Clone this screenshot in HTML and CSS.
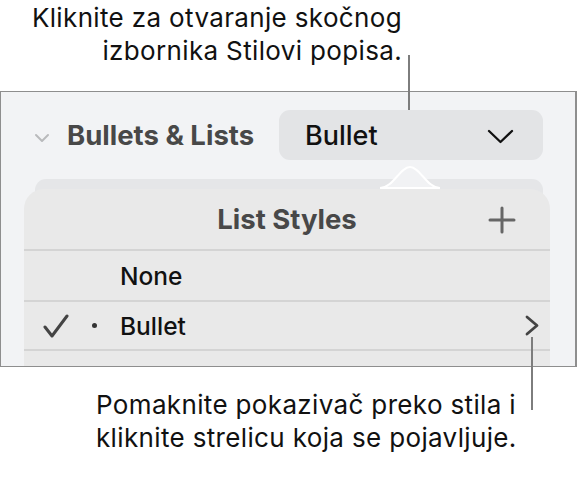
FILE: index.html
```html
<!DOCTYPE html>
<html lang="hr">
<head>
<meta charset="utf-8">
<link rel="stylesheet" href="styles.css">
</head>
<body>
<div class="page">
  <div class="callout callout-top">
    <p>Kliknite za otvaranje skočnog<br>izbornika Stilovi popisa.</p>
  </div>
  <div class="panel">
    <div class="header">
      <svg class="disclosure" width="16" height="10" viewBox="0 0 16 10"><polyline points="2,2 8,8 14,2" fill="none" stroke="#b9babc" stroke-width="2" stroke-linecap="round" stroke-linejoin="round"/></svg>
      <span class="section-title">Bullets &amp; Lists</span>
      <div class="popup">
        <span class="popup-label">Bullet</span>
        <svg class="popup-chevron" width="27" height="15" viewBox="0 0 27 15"><polyline points="2,2 13.5,13 25,2" fill="none" stroke="#111" stroke-width="2.3" stroke-linecap="round" stroke-linejoin="round"/></svg>
      </div>
    </div>
    <div class="stack">
      <div class="card"></div>
      <svg class="arrow" width="62" height="24" viewBox="0 0 62 24"><path d="M1,23 C14,23 21,2 31,2 C41,2 48,23 61,23 Z" fill="#f1f2f4" stroke="#ffffff" stroke-width="2"/></svg>
      <div class="popover">
        <div class="pop-head">
          <span class="pop-title">List Styles</span>
          <svg class="plus" width="28" height="28" viewBox="0 0 28 28"><path d="M14,2 V26 M2,14 H26" stroke="#666" stroke-width="3" stroke-linecap="round"/></svg>
        </div>
        <div class="row">
          <span class="mark"></span>
          <span class="bullet-col"></span>
          <span class="row-label">None</span>
        </div>
        <div class="row">
          <span class="mark"><svg width="26" height="24" viewBox="0 0 26 24"><polyline points="2,13 9,22 24,2" fill="none" stroke="#444" stroke-width="3" stroke-linecap="round" stroke-linejoin="round"/></svg></span>
          <span class="bullet-col"><span class="dot"></span></span>
          <span class="row-label">Bullet</span>
          <svg class="row-chevron" width="14" height="21" viewBox="0 0 14 21"><polyline points="2,2 12,10.5 2,19" fill="none" stroke="#444" stroke-width="2.8" stroke-linecap="round" stroke-linejoin="round"/></svg>
        </div>
        <div class="row"></div>
      </div>
    </div>
  </div>
  <div class="callout callout-bottom">
    <p>Pomaknite pokazivač preko stila i<br>kliknite strelicu koja se pojavljuje.</p>
  </div>
  <div class="leader leader-top"></div>
  <div class="leader leader-bottom"></div>
</div>
</body>
</html>
```

FILE: styles.css
```css
* { box-sizing: border-box; }
html, body { margin: 0; padding: 0; background: #ffffff; }
body { font-family: Inter, "Noto Sans", "DejaVu Sans", sans-serif; color: #111; }

.page { position: relative; width: 577px; height: 497px; overflow: hidden; }

.callout p { margin: 0; font-size: 26px; line-height: 33px; letter-spacing: 0.35px; color: #111; font-weight: 400; white-space: nowrap; }
.callout-top { height: 91px; width: 402px; text-align: right; padding-top: 1px; }
.callout-bottom { padding-left: 96px; padding-top: 21px; }

.panel {
  width: 577px;
  height: 276px;
  background: #f2f3f5;
  border: 1px solid #8e8e8e;
  border-right-width: 2px;
  overflow: hidden;
}

.header { display: flex; align-items: center; padding-top: 18px; height: 68px; }
.disclosure { margin-left: 33px; margin-top: 5px; }
.section-title { margin-left: 17px; font-size: 27.5px; font-weight: 700; color: #484848; }
.popup {
  margin-left: auto;
  margin-right: 32px;
  width: 264px;
  height: 50px;
  border-radius: 11px;
  background: #e3e4e6;
  display: flex;
  align-items: center;
  padding-left: 26px;
  padding-right: 29px;
}
.popup-label { font-size: 27px; font-weight: 500; color: #111; }
.popup-chevron { margin-left: auto; margin-top: 3px; }

.stack { position: relative; margin-top: 19px; height: 200px; }
.card {
  margin-left: 34px;
  width: 508px;
  height: 200px;
  border-radius: 11px;
  background: #e5e6e8;
}
.arrow { position: absolute; left: 378px; top: -14px; }
.popover {
  position: absolute;
  left: 23px;
  top: 10px;
  width: 526px;
  height: 200px;
  border-radius: 20px 20px 0 0;
  background: #e9e9e9;
}
.pop-head { position: relative; height: 60px; display: flex; align-items: center; justify-content: center; }
.pop-title { font-size: 27.5px; font-weight: 700; color: #484848; }
.plus { position: absolute; right: 34px; top: 17px; }

.row {
  display: flex;
  align-items: center;
  height: 51px;
  border-top: 2px solid #d4d4d4;
  padding-left: 19px;
  padding-right: 11px;
}
.row + .row { height: 49px; }
.mark { width: 26px; display: flex; align-items: center; }
.bullet-col { width: 51px; display: flex; justify-content: center; }
.dot { width: 5px; height: 5px; border-radius: 50%; background: #333; }
.row-label { font-size: 24.5px; font-weight: 500; color: #111; }
.row-chevron { margin-left: auto; }

.leader { position: absolute; width: 2px; background: #7d7d7d; }
.leader-top { left: 408px; top: 55px; height: 55px; }
.leader-bottom { left: 531px; top: 337px; height: 73px; }
```
